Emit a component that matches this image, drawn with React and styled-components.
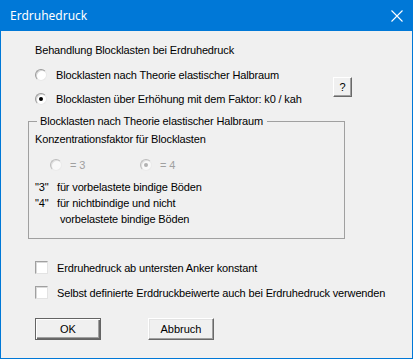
import React from "react";
import styled, { createGlobalStyle } from "styled-components";

const GlobalStyle = createGlobalStyle`
  html, body {
    margin: 0;
    padding: 0;
    background: #f0f0f0;
  }
  body {
    font-family: "Liberation Sans", Arial, sans-serif;
    font-size: 11px;
    color: #000;
  }
`;

const Window = styled.div`
  width: 413px;
  height: 359px;
  box-sizing: border-box;
  border: 1px solid #0078d7;
  border-top: 0;
  background: #f0f0f0;
  display: flex;
  flex-direction: column;
`;

const TitleBar = styled.div`
  height: 31px;
  margin: 0 -1px;
  background: #0078d7;
  color: #fff;
  display: flex;
  align-items: center;
  justify-content: space-between;
  padding: 0 10px 0 10px;
  font-family: "Noto Sans", "Open Sans", sans-serif;
  font-size: 12px;
`;

const CloseIcon = styled.svg`
  width: 12px;
  height: 12px;
`;

const Body = styled.div`
  padding: 13px 0 0 27px;
  display: flex;
  flex-direction: column;
  letter-spacing: -0.15px;
`;

const Line = styled.div`
  height: 13px;
  line-height: 13px;
  white-space: nowrap;
  padding-left: ${(p) => p.$indent || 0}px;
  color: ${(p) => (p.$disabled ? "#a0a0a0" : "#000")};
`;

const ChoiceArea = styled.div`
  margin-top: 11px;
  padding-left: 7px;
  display: grid;
  grid-template-columns: 298px 19px;
  align-items: center;
`;

const RadioStack = styled.div`
  display: flex;
  flex-direction: column;
  gap: 11px;
`;

const Option = styled.label`
  display: flex;
  align-items: center;
  gap: ${(p) => p.$gap || 9}px;
  height: 13px;
  white-space: nowrap;
  color: ${(p) => (p.$disabled ? "#a0a0a0" : "#000")};
`;

const RadioDot = styled.span`
  width: 12px;
  height: 12px;
  box-sizing: border-box;
  border-radius: 50%;
  background: #fff;
  border: 1px solid;
  border-color: #9a9a9a #e8e8e8 #e8e8e8 #9a9a9a;
  box-shadow: inset 1px 1px 0 #d6d6d6;
  display: flex;
  align-items: center;
  justify-content: center;
  flex-shrink: 0;
  opacity: ${(p) => (p.$disabled ? 0.6 : 1)};

  &::after {
    content: "";
    width: 4px;
    height: 4px;
    border-radius: 50%;
    background: ${(p) => (p.$disabled ? "#8a8a8a" : "#000")};
    display: ${(p) => (p.$checked ? "block" : "none")};
  }
`;

const HelpButton = styled.button`
  width: 19px;
  height: 20px;
  padding: 0;
  margin-top: 1px;
  font-family: "Liberation Sans", Arial, sans-serif;
  font-size: 11px;
  background: #f0f0f0;
  border: 1px solid;
  border-color: #fff #696969 #696969 #fff;
  box-shadow: inset -1px -1px 0 #a0a0a0;
  color: #000;
`;

const Group = styled.fieldset`
  margin: 10px 0 0 0;
  width: 317px;
  box-sizing: border-box;
  border: 1px solid #a0a0a0;
  padding: 5px 6px 11px 6px;
  display: flex;
  flex-direction: column;
`;

const Legend = styled.legend`
  padding: 0 4px 0 3px;
  margin-left: 2px;
  line-height: 13px;
  height: 13px;
`;

const FactorRow = styled.div`
  display: flex;
  margin: 12px 0 0 15px;
`;

const FactorCell = styled.div`
  width: 90px;
`;

const NoteList = styled.div`
  margin-top: 8px;
  display: grid;
  grid-template-columns: 22px auto;
  grid-auto-rows: 16px;
  align-items: center;
  white-space: nowrap;
`;

const CheckArea = styled.div`
  margin-top: 22px;
  padding-left: 7px;
  display: flex;
  flex-direction: column;
  gap: 12px;
`;

const CheckBox = styled.span`
  width: 13px;
  height: 13px;
  box-sizing: border-box;
  background: #fff;
  border: 1px solid;
  border-color: #a0a0a0 #e3e3e3 #e3e3e3 #a0a0a0;
  box-shadow: inset 1px 1px 0 #dadada;
  flex-shrink: 0;
`;

const ButtonRow = styled.div`
  margin: 19px 0 0 7px;
  display: flex;
  gap: 47px;
`;

const PushButton = styled.button`
  width: 66px;
  height: 22px;
  padding: 0;
  box-sizing: border-box;
  font-family: "Liberation Sans", Arial, sans-serif;
  font-size: 11px;
  color: #000;
  background: #f0f0f0;
  border: 1px solid;
  border-color: ${(p) =>
    p.$default ? "#646464" : "#fff #696969 #696969 #fff"};
  box-shadow: ${(p) =>
    p.$default
      ? "inset 1px 1px 0 #fff, inset -1px -1px 0 #696969, inset -2px -2px 0 #a0a0a0"
      : "inset -1px -1px 0 #a0a0a0, inset 1px 1px 0 #e3e3e3"};
`;

export default function App() {
  return (
    <>
      <GlobalStyle />
      <Window>
        <TitleBar>
          <span>Erdruhedruck</span>
          <CloseIcon viewBox="0 0 12 12">
            <path d="M0.5 0.5 L11.5 11.5 M11.5 0.5 L0.5 11.5" stroke="#fff" strokeWidth="1.1" fill="none" />
          </CloseIcon>
        </TitleBar>
        <Body>
          <Line $indent={7}>Behandlung Blocklasten bei Erdruhedruck</Line>
          <ChoiceArea>
            <RadioStack>
              <Option>
                <RadioDot />
                Blocklasten nach Theorie elastischer Halbraum
              </Option>
              <Option>
                <RadioDot $checked />
                Blocklasten über Erhöhung mit dem Faktor: k0 / kah
              </Option>
            </RadioStack>
            <HelpButton>?</HelpButton>
          </ChoiceArea>
          <Group>
            <Legend>Blocklasten nach Theorie elastischer Halbraum</Legend>
            <Line>Konzentrationsfaktor für Blocklasten</Line>
            <FactorRow>
              <FactorCell>
                <Option $disabled $gap={8}>
                  <RadioDot $disabled />= 3
                </Option>
              </FactorCell>
              <FactorCell>
                <Option $disabled $gap={8}>
                  <RadioDot $disabled $checked />= 4
                </Option>
              </FactorCell>
            </FactorRow>
            <NoteList>
              <span>"3"</span>
              <span>für vorbelastete bindige Böden</span>
              <span>"4"</span>
              <span>für nichtbindige und nicht</span>
              <span />
              <span>&nbsp;vorbelastete bindige Böden</span>
            </NoteList>
          </Group>
          <CheckArea>
            <Option>
              <CheckBox />
              Erdruhedruck ab untersten Anker konstant
            </Option>
            <Option>
              <CheckBox />
              Selbst definierte Erddruckbeiwerte auch bei Erdruhedruck verwenden
            </Option>
          </CheckArea>
          <ButtonRow>
            <PushButton $default>OK</PushButton>
            <PushButton>Abbruch</PushButton>
          </ButtonRow>
        </Body>
      </Window>
    </>
  );
}
